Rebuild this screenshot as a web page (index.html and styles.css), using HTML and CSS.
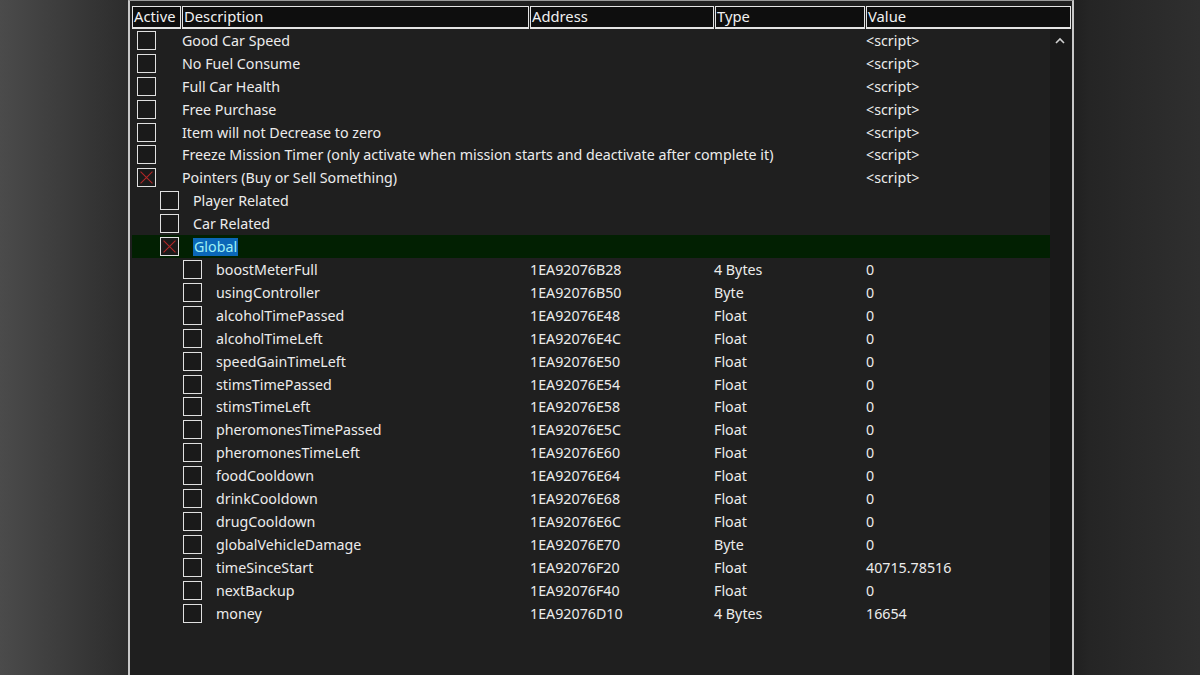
FILE: index.html
```html
<!DOCTYPE html>
<html lang="en">
<head>
<meta charset="UTF-8">
<title>Cheat Table</title>
<link rel="stylesheet" href="styles.css">
</head>
<body>
<div class="tabla">
    <div class="cabecera">
        <div class="col">Active</div>
        <div class="col">Description</div>
        <div class="col">Address</div>
        <div class="col">Type</div>
        <div class="col">Value</div>
    </div>
    <div class="lista">
        <div class="filas">
            <div class="fila"><div class="arbol"><span class="caja"></span><span class="desc">Good Car Speed</span></div><div></div><div></div><div>&lt;script&gt;</div></div>
            <div class="fila"><div class="arbol"><span class="caja"></span><span class="desc">No Fuel Consume</span></div><div></div><div></div><div>&lt;script&gt;</div></div>
            <div class="fila"><div class="arbol"><span class="caja"></span><span class="desc">Full Car Health</span></div><div></div><div></div><div>&lt;script&gt;</div></div>
            <div class="fila"><div class="arbol"><span class="caja"></span><span class="desc">Free Purchase</span></div><div></div><div></div><div>&lt;script&gt;</div></div>
            <div class="fila"><div class="arbol"><span class="caja"></span><span class="desc">Item will not Decrease to zero</span></div><div></div><div></div><div>&lt;script&gt;</div></div>
            <div class="fila"><div class="arbol"><span class="caja"></span><span class="desc">Freeze Mission Timer (only activate when mission starts and deactivate after complete it)</span></div><div></div><div></div><div>&lt;script&gt;</div></div>
            <div class="fila"><div class="arbol"><span class="caja marcada"><svg viewBox="0 0 20 20"><path d="M3 3L17 17M17 3L3 17"/></svg></span><span class="desc">Pointers (Buy or Sell Something)</span></div><div></div><div></div><div>&lt;script&gt;</div></div>

            <div class="fila nivel1"><div class="arbol"><span class="caja"></span><span class="desc">Player Related</span></div><div></div><div></div><div></div></div>
            <div class="fila nivel1"><div class="arbol"><span class="caja"></span><span class="desc">Car Related</span></div><div></div><div></div><div></div></div>
            <div class="fila nivel1 activa"><div class="arbol"><span class="caja marcada"><svg viewBox="0 0 20 20"><path d="M3 3L17 17M17 3L3 17"/></svg></span><span class="desc seleccion">Global</span></div><div></div><div></div><div></div></div>

            <div class="fila nivel2"><div class="arbol"><span class="caja"></span><span class="desc">boostMeterFull</span></div><div>1EA92076B28</div><div>4 Bytes</div><div>0</div></div>
            <div class="fila nivel2"><div class="arbol"><span class="caja"></span><span class="desc">usingController</span></div><div>1EA92076B50</div><div>Byte</div><div>0</div></div>
            <div class="fila nivel2"><div class="arbol"><span class="caja"></span><span class="desc">alcoholTimePassed</span></div><div>1EA92076E48</div><div>Float</div><div>0</div></div>
            <div class="fila nivel2"><div class="arbol"><span class="caja"></span><span class="desc">alcoholTimeLeft</span></div><div>1EA92076E4C</div><div>Float</div><div>0</div></div>
            <div class="fila nivel2"><div class="arbol"><span class="caja"></span><span class="desc">speedGainTimeLeft</span></div><div>1EA92076E50</div><div>Float</div><div>0</div></div>
            <div class="fila nivel2"><div class="arbol"><span class="caja"></span><span class="desc">stimsTimePassed</span></div><div>1EA92076E54</div><div>Float</div><div>0</div></div>
            <div class="fila nivel2"><div class="arbol"><span class="caja"></span><span class="desc">stimsTimeLeft</span></div><div>1EA92076E58</div><div>Float</div><div>0</div></div>
            <div class="fila nivel2"><div class="arbol"><span class="caja"></span><span class="desc">pheromonesTimePassed</span></div><div>1EA92076E5C</div><div>Float</div><div>0</div></div>
            <div class="fila nivel2"><div class="arbol"><span class="caja"></span><span class="desc">pheromonesTimeLeft</span></div><div>1EA92076E60</div><div>Float</div><div>0</div></div>
            <div class="fila nivel2"><div class="arbol"><span class="caja"></span><span class="desc">foodCooldown</span></div><div>1EA92076E64</div><div>Float</div><div>0</div></div>
            <div class="fila nivel2"><div class="arbol"><span class="caja"></span><span class="desc">drinkCooldown</span></div><div>1EA92076E68</div><div>Float</div><div>0</div></div>
            <div class="fila nivel2"><div class="arbol"><span class="caja"></span><span class="desc">drugCooldown</span></div><div>1EA92076E6C</div><div>Float</div><div>0</div></div>
            <div class="fila nivel2"><div class="arbol"><span class="caja"></span><span class="desc">globalVehicleDamage</span></div><div>1EA92076E70</div><div>Byte</div><div>0</div></div>
            <div class="fila nivel2"><div class="arbol"><span class="caja"></span><span class="desc">timeSinceStart</span></div><div>1EA92076F20</div><div>Float</div><div>40715.78516</div></div>
            <div class="fila nivel2"><div class="arbol"><span class="caja"></span><span class="desc">nextBackup</span></div><div>1EA92076F40</div><div>Float</div><div>0</div></div>
            <div class="fila nivel2"><div class="arbol"><span class="caja"></span><span class="desc">money</span></div><div>1EA92076D10</div><div>4 Bytes</div><div>16654</div></div>
        </div>
        <div class="scroll">
            <svg class="flecha" viewBox="0 0 10 8"><path d="M1 6L5 2L9 6"/></svg>
        </div>
    </div>
</div>
</body>
</html>
```

FILE: styles.css
```css
body {
    margin: 0;
    height: 675px;
    overflow: hidden;
    font-family: "Noto Sans", "Open Sans", sans-serif;
    font-size: 14.25px;
    color: #ececec;
    background: linear-gradient(to right, #4b4b4b 0, #2c2c2c 129px, #202020 1073px, #252525 1090px, #2f2f2f 1200px);
}
.tabla {
    display: flex;
    flex-direction: column;
    margin-left: 128px;
    width: 942px;
    height: 670px;
    border-top: 1px solid #9a9a9a;
    border-left: 2px solid #c8c8c8;
    border-right: 2px solid #c8c8c8;
    background-color: #1f1f1f;
    padding-top: 5px;
}
.cabecera {
    display: grid;
    grid-template-columns: 49px 347px 184px 150px 205px;
    gap: 1px;
    margin-left: 2px;
    height: 23px;
}
.cabecera .col {
    background-color: #0e0e0e;
    border: 1.5px solid #e4e4e4;
    border-bottom-width: 2px;
    padding-left: 1px;
    line-height: 19px;
    font-size: 14.75px;
    color: #f0f0f0;
    white-space: nowrap;
    overflow: hidden;
}
.lista {
    flex: 1;
    display: flex;
    padding-left: 2px;
}
.filas {
    width: 918px;
}
.scroll {
    flex: 1;
    background-color: #191919;
    position: relative;
}
.flecha {
    position: absolute;
    left: 5px;
    top: 8px;
    width: 10px;
    height: 8px;
    fill: none;
    stroke: #d0d0d0;
    stroke-width: 1.6;
}
.fila {
    display: grid;
    grid-template-columns: 398px 184px 152px 1fr;
    height: 22.92px;
    align-items: center;
    white-space: nowrap;
}
.arbol {
    display: flex;
    align-items: center;
}
.caja {
    width: 17px;
    height: 17px;
    border: 1.6px solid #e0e0e0;
    background-color: #1a1a1a;
    margin-left: 5px;
    flex-shrink: 0;
}
.caja svg {
    display: block;
    width: 100%;
    height: 100%;
    stroke: #b02626;
    stroke-width: 1.3;
}
.desc {
    margin-left: 26px;
}
.nivel1 .caja {
    margin-left: 28px;
}
.nivel2 .caja {
    margin-left: 51px;
}
.nivel1 .desc,
.nivel2 .desc {
    margin-left: 14px;
}
.activa {
    background-color: #022002;
}
.seleccion {
    background-color: #0b67b8;
    color: #9ff0f4;
    padding: 0 1px;
    margin-left: 12px;
    line-height: 18px;
}
```
